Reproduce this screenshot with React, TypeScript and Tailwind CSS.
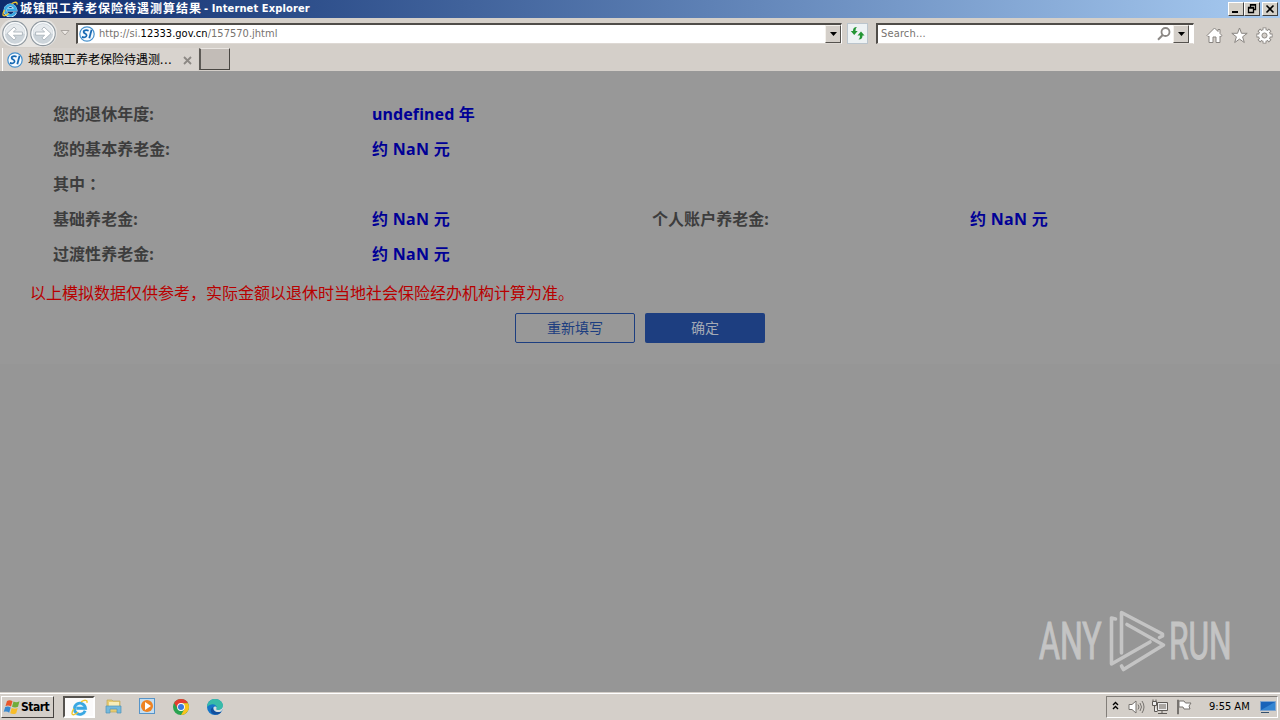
import type { ReactNode } from "react";

const rows = [
  [{ label: "您的退休年度:", value: "undefined 年" }],
  [{ label: "您的基本养老金:", value: "约 NaN 元" }],
  [{ label: "其中：", value: "" }],
  [
    { label: "基础养老金:", value: "约 NaN 元" },
    { label: "个人账户养老金:", value: "约 NaN 元" },
  ],
  [{ label: "过渡性养老金:", value: "约 NaN 元" }],
];

const IeIcon = ({ size = 16 }: { size?: number }) => (
  <svg width={size} height={size} viewBox="0 0 16 16" fill="none">
    <path d="M13.400 11.200A5.200 5.200 0 1 1 13.600 8.700H5" stroke="#d9f1fb" strokeWidth="3.400" />
    <path d="M13.300 11A5.200 5.200 0 1 1 13.600 8.700H5" stroke="#3aa7e2" strokeWidth="2.600" />
    <path
      d="M9.500 2.700C12.500.8 15.800.4 15 3.600M2.800 9C.2 12.500.4 15.300 2.800 14.700c1.500-.4 2.600-1.200 3.800-2.200"
      stroke="#f0c62e"
      strokeWidth="1.300"
    />
  </svg>
);

const SiteIcon = () => (
  <svg width="16" height="16" viewBox="0 0 16 16" fill="none">
    <circle cx="8" cy="8" r="7.200" fill="#f4faff" stroke="#4690cb" strokeWidth="1.200" />
    <path d="M9.600 4.700C7.300 3.600 4.200 4.300 4.700 6.300c.3 1.400 3.100 1.300 2.900 3.200C7.400 11.300 5 11.800 2.800 10.900" stroke="#1769b3" strokeWidth="1.700" />
    <path d="M12.600 3.800 10.300 12.300" stroke="#1769b3" strokeWidth="1.800" />
  </svg>
);

const NavButton = ({ back = false }: { back?: boolean }) => (
  <svg width="28" height="27" viewBox="0 0 28 27" className={back ? "" : "-scale-x-100"}>
    <circle cx="14" cy="13.500" r="12.200" fill="#e9edf0" stroke="#8f989f" strokeWidth="1.200" />
    <circle cx="14" cy="13.500" r="10.800" fill="#ccd4da" stroke="#f8fafb" strokeWidth="1.300" />
    <path d="M4 14a10 10 0 0 1 20 0c-6-2-14-2-20 0Z" fill="#e6eaed" />
    <path
      d="m6 13.500 7-6.500 2.200 2.200-2.800 2.800h9v3.200h-9l2.800 2.800L13 20Z"
      fill="#fff"
      stroke="#a3adb5"
      strokeWidth=".8"
    />
  </svg>
);

const DropArrow = () => (
  <span className="flex h-[18px] w-4 shrink-0 items-center justify-center border border-t-[#f4f1ec] border-r-[#55524e] border-b-[#55524e] border-l-[#f4f1ec] bg-[#d4cfc9]">
    <svg width="7" height="4">
      <path d="M0 0h7L3.500 4Z" />
    </svg>
  </span>
);

const WindowButton = ({ children }: { children: ReactNode }) => (
  <span className="flex h-[14px] w-4 items-center justify-center border border-t-white border-r-[#404040] border-b-[#404040] border-l-white bg-[#d4d0c8]">
    <svg width="12" height="10" viewBox="0 0 12 10" fill="none" stroke="#000">
      {children}
    </svg>
  </span>
);

const TitleBar = () => (
  <div className="flex h-[18px] items-center bg-linear-to-r from-[#0d2a6c] to-[#a8cbf1] pr-[2px] pl-[2px]">
    <IeIcon />
    <span className="ml-[2px] flex items-center text-white">
      <span className="w-[184px] text-[12px] font-bold tracking-[1px] whitespace-nowrap">
        城镇职工养老保险待遇测算结果
      </span>
      <span className="pt-px font-['DejaVu_Sans_Condensed','DejaVu_Sans'] text-[11px] font-bold tracking-[0.12px] whitespace-nowrap">
        - Internet Explorer
      </span>
    </span>
    <div className="ml-auto flex">
      <WindowButton>
        <path d="M2 8h6" strokeWidth="2" />
      </WindowButton>
      <WindowButton>
        <path d="M4.500 3.500v-3h5v5h-2M4 1h6M2.500 3.500h5v5h-5ZM2 4h6" strokeWidth="1.300" />
      </WindowButton>
      <span className="ml-[2px]">
        <WindowButton>
          <path d="m2.500 1.500 7 7m0-7-7 7" strokeWidth="1.600" />
        </WindowButton>
      </span>
    </div>
  </div>
);

const Toolbar = () => (
  <div className="flex h-[30px] items-center">
    <div className="flex h-[28px] w-[57px] shrink-0 items-center rounded-full bg-[#e6e4e1]">
      <span className="ml-px">
        <NavButton back />
      </span>
      <NavButton />
    </div>
    <svg width="10" height="6" className="ml-[3px]">
      <path d="M1 .5h8l-4 4.500Z" fill="#eeeae6" stroke="#aaa5a0" />
    </svg>
    <div className="ml-[6px] flex h-[21px] w-[766px] shrink-0 items-center border-t-2 border-r border-b border-l-2 border-t-[#504d49] border-r-white border-b-[#ded9d4] border-l-[#504d49] bg-white pl-px">
      <SiteIcon />
      <span className="ml-[4px] pt-px font-['DejaVu_Sans_Condensed','DejaVu_Sans'] text-[11px] tracking-[0.02px] whitespace-nowrap text-[#77736f]">
        http://si.<span className="text-black">12333.gov.cn</span>/157570.jhtml
      </span>
      <span className="ml-auto">
        <DropArrow />
      </span>
    </div>
    <div className="ml-[5px] flex h-[21px] w-[21px] shrink-0 items-center justify-center border border-[#bbc5cd] bg-[#edf2f4]">
      <svg width="15" height="15" viewBox="0 0 15 15" fill="#239534">
        <path d="M7 1C4 1 3 2.500 3 5H.8l3.400 4 3.500-4H5.500C5.500 3 6 1.800 7 1Z" />
        <path d="M8.500 13.500c3 0 4-1.500 4-4h2L11 5.500l-3.500 4H10c0 2-.5 3.200-1.500 4Z" />
      </svg>
    </div>
    <div className="ml-[8px] flex h-[21px] w-[318px] shrink-0 items-center border-t-2 border-r border-b border-l-2 border-t-[#504d49] border-r-white border-b-[#ded9d4] border-l-[#504d49] bg-white pr-[4px] pl-[3px]">
      <span className="pt-px font-['DejaVu_Sans_Condensed','DejaVu_Sans'] text-[11px] tracking-[0.15px] text-[#77736f]">Search...</span>
      <svg width="14" height="14" viewBox="0 0 14 14" fill="none" stroke="#8b8885" className="ml-auto">
        <circle cx="8.500" cy="5" r="4" strokeWidth="1.800" />
        <path d="M5.700 8 1 12.700" strokeWidth="2" />
      </svg>
      <span className="ml-[2px]">
        <DropArrow />
      </span>
    </div>
    <div className="ml-[12px] flex gap-[8px] pt-[4px]">
      <svg width="17" height="17" viewBox="0 0 17 17" fill="#fff" stroke="#898581">
        <path d="M8.500 1 1 8.500l1.200 1.200.8-.7v6.500h4V10h3v5.500h4V9l.8.700L16 8.500l-2-2V2.500h-2v2Z" />
      </svg>
      <svg width="17" height="17" viewBox="0 0 17 17" fill="#fff" stroke="#898581">
        <path d="m8.500 1 2 5.300h5.700l-4.600 3.500 1.700 5.700-4.800-3.400-4.800 3.400 1.700-5.700L.8 6.300h5.700Z" />
      </svg>
      <svg width="17" height="17" viewBox="0 0 18 18">
        <g stroke="#898581" strokeWidth="4">
          <path d="M9 .5v17M.5 9h17M3 3l12 12m0-12L3 15" />
        </g>
        <circle cx="9" cy="9" r="6.300" fill="#fff" stroke="#898581" />
        <path d="M9 1.300v15.400M1.300 9h15.400M3.600 3.600l10.800 10.800m0-10.800L3.600 14.400" stroke="#fff" strokeWidth="2.200" />
        <circle cx="9" cy="9" r="2.700" fill="#d4cfc9" stroke="#898581" />
      </svg>
    </div>
  </div>
);

const TabBar = () => (
  <div className="flex h-[23px] pl-[2px]">
    <div className="flex w-[196px] items-center border-l border-white bg-[#d8d3ce] pl-[4px]">
      <SiteIcon />
      <span className="ml-[5px] text-[12px] whitespace-nowrap text-black">
        城镇职工养老保险待遇测<span className="tracking-[0.9px]">...</span>
      </span>
      <svg width="9" height="9" viewBox="0 0 9 9" className="mt-px mr-[6px] ml-auto">
        <path d="m1 1 7 7m0-7L1 8" stroke="#8c8884" strokeWidth="1.800" />
      </svg>
    </div>
    <div className="ml-px h-[22px] w-[31px] border-t border-r border-b border-l-2 border-t-[#e9e5e1] border-r-[#494642] border-b-[#494642] border-l-[#5d5a56] bg-[#c2bcb7]" />
  </div>
);

const Result = () => (
  <div className="h-[293px] bg-[#989898] pt-[25px]">
    {rows.map((row, i) => (
      <div
        key={i}
        className="grid h-[35px] grid-cols-[319px_280px_318px_1fr] items-center pl-[53px] text-[16px] font-bold"
      >
        {row.map(({ label, value }) => (
          <div key={label} className="contents">
            <span
              className={
                label.endsWith("：")
                  ? "pb-[2px] font-['Noto_Sans_CJK_TC',sans-serif] text-[#3d3d3d]"
                  : "tracking-[0.05px] text-[#3d3d3d]"
              }
            >
              {label}
            </span>
            <span
              className={
                value.startsWith("约")
                  ? "tracking-[0.3px] text-[#000096]"
                  : "tracking-[0.1px] text-[#000096]"
              }
            >
              {value}
            </span>
          </div>
        ))}
      </div>
    ))}
    <p className="mt-[10px] pl-[30px] text-[16px] leading-[24px] text-[#b80000]">
      以上模拟数据仅供参考，实际金额以退休时当地社会保险经办机构计算为准。
    </p>
    <div className="mt-[8px] flex justify-center gap-[10px] text-[14px]">
      <button className="h-[30px] w-[120px] rounded-[2px] border border-[#1d3e80] pb-[2px] text-[#1d3e80]">
        重新填写
      </button>
      <button className="h-[30px] w-[120px] rounded-[2px] bg-[#1d3e80] pb-[2px] text-[#a4aab5]">
        确定
      </button>
    </div>
  </div>
);

const Watermark = () => (
  <div className="absolute right-[46px] bottom-[20px] flex h-[62px] w-[196px] items-center opacity-90">
    <svg width="196" height="62" viewBox="0 0 196 62" fill="none" stroke="#c9c9c9">
      <g fill="#c9c9c9" strokeWidth="1.200" fontFamily="Roboto" fontSize="51">
        <text transform="translate(1 49) scale(.62 1)" textLength="101" lengthAdjust="spacingAndGlyphs">ANY</text>
        <text transform="translate(131 49) scale(.62 1)" textLength="101" lengthAdjust="spacingAndGlyphs">RUN</text>
      </g>
      <g strokeWidth="3.600" strokeLinejoin="round" strokeLinecap="round">
        <path d="M77.500 9 73.500 8v46L112 32" />
        <path d="M83.500 43V2.500L124.500 24v2l-3 1.500" />
        <path d="M89 14.500 125.500 35 85.500 59.500l-2-3.500" />
      </g>
    </svg>
  </div>
);

const TaskButton = ({ children }: { children: ReactNode }) => (
  <span className="flex w-[34px] items-center justify-center">{children}</span>
);

const Taskbar = () => (
  <div className="flex h-[28px] items-center border-t border-[#d4cfc9] bg-[#d4cfc9] shadow-[inset_0_1px_0_#fff]">
    <div className="mt-px ml-px flex h-[22px] w-[53px] items-center border border-t-white border-r-[#45423f] border-b-[#45423f] border-l-white pl-px">
      <svg width="18" height="16" viewBox="0 0 18 16">
        <path d="M4 2c2-1.500 4-.8 5.500.2L8 7.500C6.300 6.300 4.500 6 2.500 7Z" fill="#e9562a" />
        <path d="M10.500 2.500c2 1 3.800 1 6-.3L15 7.800c-2 1-4 .9-6 0Z" fill="#71ad3c" />
        <path d="M2.200 8c2-1 3.800-.7 5.500.4l-1.500 5.300C4.500 12.500 2.700 12.300.7 13Z" fill="#3989cf" />
        <path d="M8.700 9c2 .9 4 1 6 0l-1.500 5.200c-2.200 1.200-4 1-6 0Z" fill="#f8bd29" />
      </svg>
      <span className="font-['DejaVu_Sans_Condensed','DejaVu_Sans'] text-[12px] font-bold tracking-[-0.5px] text-black">Start</span>
    </div>
    <div className="mt-px ml-[9px] flex h-[22px] w-[32px] items-center justify-center border-2 border-t-[#55524e] border-r-white border-b-white border-l-[#55524e] bg-[#fbfafa]">
      <IeIcon size={17} />
    </div>
    <div className="ml-px flex">
      <TaskButton>
        <svg width="17" height="17" viewBox="0 0 17 17">
          <path d="M2 2h5l1 1h7v11H2Z" fill="#e9cc70" stroke="#bda65a" strokeWidth=".7" />
          <path d="M4 4h10v4H4Z" fill="#f8edb8" />
          <path d="M1 8h15v7h-4v-4H5v4H1Z" fill="#75b9dc" stroke="#4d94b8" strokeWidth=".7" />
        </svg>
      </TaskButton>
      <TaskButton>
        <svg width="17" height="17" viewBox="0 0 17 17">
          <rect x=".5" y=".5" width="15" height="15" fill="#c5def1" stroke="#5794c8" />
          <circle cx="8" cy="8" r="6" fill="#ee8322" />
          <path d="m6 4 6 4-6 4Z" fill="#fff" />
        </svg>
      </TaskButton>
      <TaskButton>
        <svg width="16" height="16" viewBox="0 0 16 16">
          <circle cx="8" cy="8" r="8" fill="#29a350" />
          <path d="M1.100 4A8 8 0 0 1 15 4.200H8L4.800 9.800Z" fill="#e43d31" />
          <path d="M8 4.200h7A8 8 0 0 1 8 16l3.500-6Z" fill="#fbc31c" />
          <circle cx="8" cy="8" r="3.900" fill="#fff" />
          <circle cx="8" cy="8" r="3" fill="#3979df" />
        </svg>
      </TaskButton>
      <TaskButton>
        <svg width="16" height="16" viewBox="0 0 16 16">
          <circle cx="8" cy="8" r="8" fill="#1676c8" />
          <path d="M0 8C.4 2.500 4 0 8 0c5 0 8 3.500 8 6.500S13.500 11 11 11c-2 0-2-.8-1.300-2C10 5 4 3.500 0 8Z" fill="#38bba8" />
          <path d="M6.200 8.200c-1 3 2 5.800 8.300 4.500-2.200 3-6.500 4-9.500 1.500-2-2-1.500-5 1.200-6Z" fill="#124f9e" />
          <path d="M9.700 9C9 10.200 9 11 11 11c2.500 0 5-1.500 5-4.500V10l-2 2.500c-4.500 1.500-8-.5-7.500-4 .5-1.500 3-1.500 3.200.5Z" fill="#d7dedd" />
        </svg>
      </TaskButton>
    </div>
    <div className="mt-px mr-[2px] ml-auto flex h-[22px] w-[172px] items-center border border-t-[#827e79] border-r-white border-b-white border-l-[#827e79] pl-[5px]">
      <svg width="7" height="9" viewBox="0 0 7 9" fill="none" stroke="#000" strokeWidth="1.400" className="mb-[3px]">
        <path d="m1 4 2.500-2.500L6 4M1 8l2.500-2.500L6 8" />
      </svg>
      <svg width="17" height="16" viewBox="0 0 17 16" fill="none" stroke="#77736f" className="ml-[9px]">
        <path d="M1 5.500h3L8 2v12l-4-3.500H1Z" fill="#fff" />
        <path d="M10 5.500q2 2.500 0 5M12 4q3 4 0 8M14 2q4 6 0 12" />
      </svg>
      <svg width="17" height="16" viewBox="0 0 17 16" fill="#eee" stroke="#5d5955" className="ml-[7px]">
        <path d="M5.500 3.500h10v8h-10ZM10 11.500v3M6 14.500h9" />
        <path d="M7 5h7v5H7Z" fill="#aaa6a2" stroke="none" />
        <path d="M.5 2.500h4v4h-4ZM1 .5v2M4 .5v2M2.500 6.500v6h3" />
      </svg>
      <svg width="17" height="16" viewBox="0 0 17 16" fill="#fff" stroke="#77736f" className="ml-[7px]">
        <path d="M1.500 1v14h1V1Z" />
        <path d="M3 2h5l1.500 2H15l-2 3 1 3H8L7 8H3Z" />
      </svg>
      <span className="ml-[16px] pt-px font-['DejaVu_Sans_Condensed','DejaVu_Sans'] text-[11px] whitespace-nowrap text-black">9:55 AM</span>
      <svg width="16" height="13" viewBox="0 0 16 13" className="mr-px ml-auto">
        <path d="M.5.5h15v9H.5Z" fill="#1863b9" stroke="#7fa4ce" />
        <path d="M1 9 15 1v8Z" fill="#3485d2" />
        <path d="M1 11h8v1H1Z" fill="#34506d" />
      </svg>
    </div>
  </div>
);

export default function App() {
  return (
    <div className="flex h-[720px] w-[1280px] flex-col overflow-hidden bg-[#d4cfc9] font-['Noto_Sans','Noto_Sans_CJK_SC',sans-serif]">
      <TitleBar />
      <Toolbar />
      <TabBar />
      <main className="relative flex-1 bg-[#969696]">
        <Result />
        <Watermark />
      </main>
      <Taskbar />
    </div>
  );
}
